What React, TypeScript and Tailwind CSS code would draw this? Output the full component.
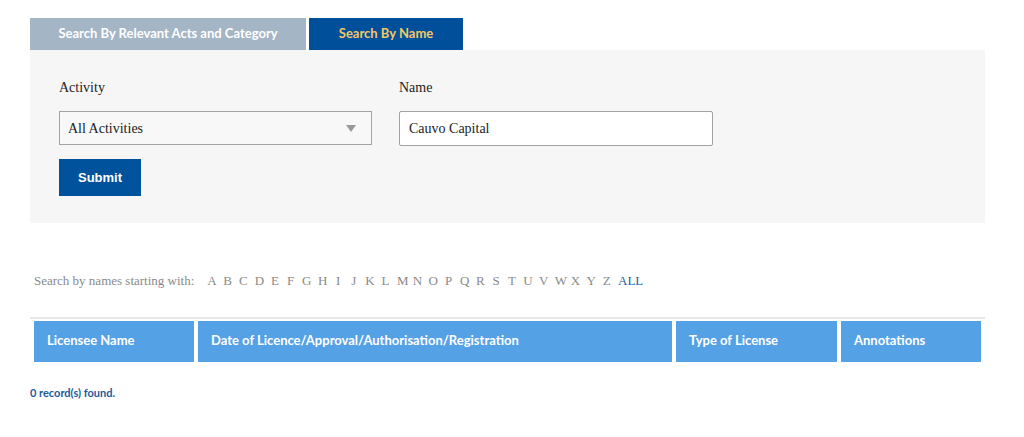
const letters = 'ABCDEFGHIJKLMNOPQRSTUVWXYZ'.split('');

const columns = [
  { label: 'Licensee Name', width: 'w-[160px]' },
  { label: 'Date of Licence/Approval/Authorisation/Registration', width: 'w-[474px]' },
  { label: 'Type of License', width: 'w-[161px]' },
  { label: 'Annotations', width: 'w-[140px]' },
];

export default function App() {
  return (
    <div className="min-h-[437px] bg-white pt-[18px] pl-[30px]">
      <div className="w-[955px]">
        {/* tabs */}
        <div className="flex gap-[3px] font-['Lato',sans-serif] text-[13px] font-bold">
          <div className="flex h-[32px] w-[276px] items-center justify-center bg-[#a4b5c5] text-white">
            Search By Relevant Acts and Category
          </div>
          <div className="flex h-[32px] w-[154px] items-center justify-center bg-[#004f9a] text-[#f3c766]">
            Search By Name
          </div>
        </div>

        {/* search form */}
        <div className="h-[173px] bg-[#f6f6f6] px-[29px] pt-[29px] font-['Liberation_Serif',serif] text-[14px] text-[#222]">
          <div className="flex gap-[27px]">
            <div className="w-[313px]">
              <div className="h-[18px] leading-[18px]">Activity</div>
              <div className="mt-[14px] flex h-[34px] items-center justify-between border border-[#a3a3a3] bg-[#f8f8f8] pl-[8px] pr-[15px]">
                <span>All Activities</span>
                <svg width="10" height="7" viewBox="0 0 10 7">
                  <path d="M0 0h10L5 7z" fill="#999" />
                </svg>
              </div>
            </div>
            <div className="w-[314px]">
              <div className="h-[18px] leading-[18px]">Name</div>
              <div className="mt-[14px] flex h-[35px] items-center rounded-[2px] border border-[#a3a3a3] bg-white pl-[9px]">
                Cauvo Capital
              </div>
            </div>
          </div>
          <button className="mt-[13px] h-[37px] w-[82px] bg-[#00529c] font-['Liberation_Sans',sans-serif] text-[13px] font-bold text-white">
            Submit
          </button>
        </div>

        {/* alphabet */}
        <div className="mt-[48px] flex items-center pl-[4px] font-['Liberation_Serif',serif] text-[13px] text-[#8a8a8a]">
          <span className="mr-[13px]">Search by names starting with:</span>
          <div className="flex gap-[7px]">
            {letters.map((l) => (
              <span key={l} className="w-[8.8px] text-center">
                {l}
              </span>
            ))}
          </div>
          <span className="ml-[7px] text-[#1d5fa3]">ALL</span>
        </div>

        {/* table header */}
        <div className="mt-[26px] flex gap-[4px] border-t-2 border-[#e8e8e8] px-[4px] pt-[2px] font-['Lato',sans-serif] text-[13px] font-bold text-white">
          {columns.map((c) => (
            <div key={c.label} className={`${c.width} flex h-[41px] items-center bg-[#55a1e6] pl-[13px]`}>
              {c.label}
            </div>
          ))}
        </div>

        <div className="mt-[23px] font-['Lato',sans-serif] text-[11px] font-bold text-[#1d5a9b]">
          0 record(s) found.
        </div>
      </div>
    </div>
  );
}
